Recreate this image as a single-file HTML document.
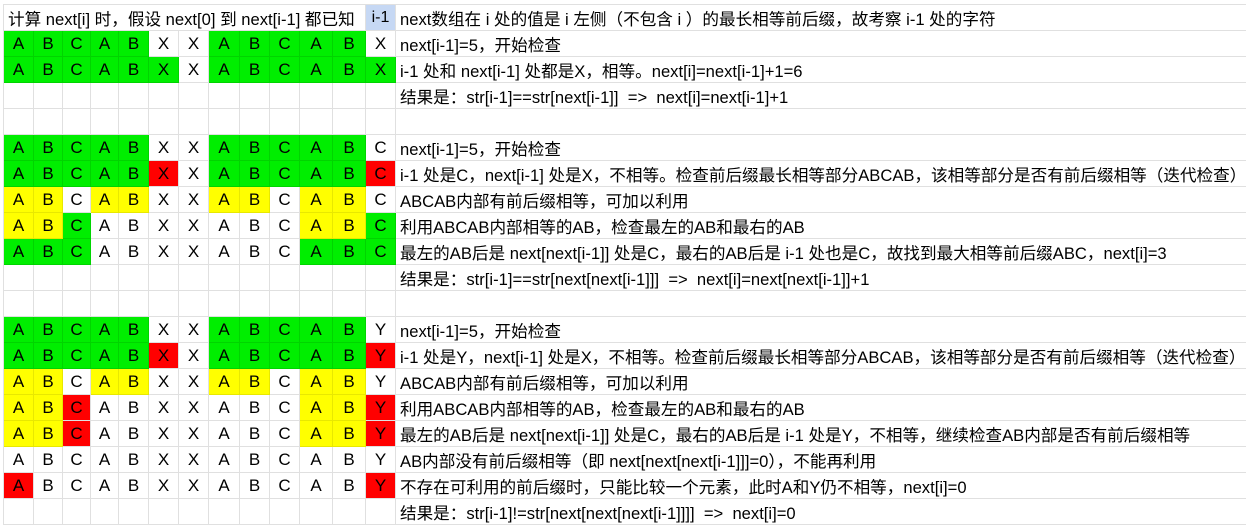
<!DOCTYPE html>
<html><head><meta charset="utf-8">
<style>
html,body{margin:0;padding:0;background:#fff;width:1246px;height:528px;overflow:hidden}
.w{position:absolute;left:3px;top:4px;border-top:1px solid #e0e0e0;border-left:1px solid #e0e0e0;box-sizing:border-box;width:1243px}
.r{display:grid;grid-template-columns:30px 29px 28px 28px 30px 30px 30px 31px 30px 30px 33px 33px 30px 851px;height:26px}
.r>i{font-style:normal;box-sizing:border-box;border-right:1px solid #e0e0e0;border-bottom:1px solid #e0e0e0;display:flex;align-items:center;justify-content:center;font:17px "Liberation Sans",sans-serif;color:#000;background:#fff}
.r>i.t{border-right:none;justify-content:flex-start;padding-left:4px;font:16.6px "Liberation Sans","Noto Sans CJK SC",sans-serif;white-space:pre}
.r>i.h{grid-column:1 / span 12;justify-content:flex-start;padding-left:4px;font:16.6px "Liberation Sans","Noto Sans CJK SC",sans-serif;white-space:pre}
.r>i.b{background:#c6d8f4;font-size:16px}
.r>i.g{background:#00ee00;border-color:#00d400}
.r>i.y{background:#ffff00;border-color:#e8e800}
.r>i.x{background:#ff0000}
</style></head><body>
<div class="w">
<div class="r"><i class="h">计算 next[i] 时，假设 next[0] 到 next[i-1] 都已知</i><i class="b">i-1</i><i class="t">next数组在 i 处的值是 i 左侧（不包含 i ）的最长相等前后缀，故考察 i-1 处的字符</i></div>
<div class="r"><i class="g">A</i><i class="g">B</i><i class="g">C</i><i class="g">A</i><i class="g">B</i><i>X</i><i>X</i><i class="g">A</i><i class="g">B</i><i class="g">C</i><i class="g">A</i><i class="g">B</i><i>X</i><i class="t">next[i-1]=5，开始检查</i></div>
<div class="r"><i class="g">A</i><i class="g">B</i><i class="g">C</i><i class="g">A</i><i class="g">B</i><i class="g">X</i><i>X</i><i class="g">A</i><i class="g">B</i><i class="g">C</i><i class="g">A</i><i class="g">B</i><i class="g">X</i><i class="t">i-1 处和 next[i-1] 处都是X，相等。next[i]=next[i-1]+1=6</i></div>
<div class="r"><i></i><i></i><i></i><i></i><i></i><i></i><i></i><i></i><i></i><i></i><i></i><i></i><i></i><i class="t">结果是：str[i-1]==str[next[i-1]]  =>  next[i]=next[i-1]+1</i></div>
<div class="r"><i></i><i></i><i></i><i></i><i></i><i></i><i></i><i></i><i></i><i></i><i></i><i></i><i></i><i class="t"></i></div>
<div class="r"><i class="g">A</i><i class="g">B</i><i class="g">C</i><i class="g">A</i><i class="g">B</i><i>X</i><i>X</i><i class="g">A</i><i class="g">B</i><i class="g">C</i><i class="g">A</i><i class="g">B</i><i>C</i><i class="t">next[i-1]=5，开始检查</i></div>
<div class="r"><i class="g">A</i><i class="g">B</i><i class="g">C</i><i class="g">A</i><i class="g">B</i><i class="x">X</i><i>X</i><i class="g">A</i><i class="g">B</i><i class="g">C</i><i class="g">A</i><i class="g">B</i><i class="x">C</i><i class="t">i-1 处是C，next[i-1] 处是X，不相等。检查前后缀最长相等部分ABCAB，该相等部分是否有前后缀相等（迭代检查）</i></div>
<div class="r"><i class="y">A</i><i class="y">B</i><i>C</i><i class="y">A</i><i class="y">B</i><i>X</i><i>X</i><i class="y">A</i><i class="y">B</i><i>C</i><i class="y">A</i><i class="y">B</i><i>C</i><i class="t">ABCAB内部有前后缀相等，可加以利用</i></div>
<div class="r"><i class="y">A</i><i class="y">B</i><i class="g">C</i><i>A</i><i>B</i><i>X</i><i>X</i><i>A</i><i>B</i><i>C</i><i class="y">A</i><i class="y">B</i><i class="g">C</i><i class="t">利用ABCAB内部相等的AB，检查最左的AB和最右的AB</i></div>
<div class="r"><i class="g">A</i><i class="g">B</i><i class="g">C</i><i>A</i><i>B</i><i>X</i><i>X</i><i>A</i><i>B</i><i>C</i><i class="g">A</i><i class="g">B</i><i class="g">C</i><i class="t">最左的AB后是 next[next[i-1]] 处是C，最右的AB后是 i-1 处也是C，故找到最大相等前后缀ABC，next[i]=3</i></div>
<div class="r"><i></i><i></i><i></i><i></i><i></i><i></i><i></i><i></i><i></i><i></i><i></i><i></i><i></i><i class="t">结果是：str[i-1]==str[next[next[i-1]]]  =>  next[i]=next[next[i-1]]+1</i></div>
<div class="r"><i></i><i></i><i></i><i></i><i></i><i></i><i></i><i></i><i></i><i></i><i></i><i></i><i></i><i class="t"></i></div>
<div class="r"><i class="g">A</i><i class="g">B</i><i class="g">C</i><i class="g">A</i><i class="g">B</i><i>X</i><i>X</i><i class="g">A</i><i class="g">B</i><i class="g">C</i><i class="g">A</i><i class="g">B</i><i>Y</i><i class="t">next[i-1]=5，开始检查</i></div>
<div class="r"><i class="g">A</i><i class="g">B</i><i class="g">C</i><i class="g">A</i><i class="g">B</i><i class="x">X</i><i>X</i><i class="g">A</i><i class="g">B</i><i class="g">C</i><i class="g">A</i><i class="g">B</i><i class="x">Y</i><i class="t">i-1 处是Y，next[i-1] 处是X，不相等。检查前后缀最长相等部分ABCAB，该相等部分是否有前后缀相等（迭代检查）</i></div>
<div class="r"><i class="y">A</i><i class="y">B</i><i>C</i><i class="y">A</i><i class="y">B</i><i>X</i><i>X</i><i class="y">A</i><i class="y">B</i><i>C</i><i class="y">A</i><i class="y">B</i><i>Y</i><i class="t">ABCAB内部有前后缀相等，可加以利用</i></div>
<div class="r"><i class="y">A</i><i class="y">B</i><i class="x">C</i><i>A</i><i>B</i><i>X</i><i>X</i><i>A</i><i>B</i><i>C</i><i class="y">A</i><i class="y">B</i><i class="x">Y</i><i class="t">利用ABCAB内部相等的AB，检查最左的AB和最右的AB</i></div>
<div class="r"><i class="y">A</i><i class="y">B</i><i class="x">C</i><i>A</i><i>B</i><i>X</i><i>X</i><i>A</i><i>B</i><i>C</i><i class="y">A</i><i class="y">B</i><i class="x">Y</i><i class="t">最左的AB后是 next[next[i-1]] 处是C，最右的AB后是 i-1 处是Y，不相等，继续检查AB内部是否有前后缀相等</i></div>
<div class="r"><i>A</i><i>B</i><i>C</i><i>A</i><i>B</i><i>X</i><i>X</i><i>A</i><i>B</i><i>C</i><i>A</i><i>B</i><i>Y</i><i class="t">AB内部没有前后缀相等（即 next[next[next[i-1]]]=0），不能再利用</i></div>
<div class="r"><i class="x">A</i><i>B</i><i>C</i><i>A</i><i>B</i><i>X</i><i>X</i><i>A</i><i>B</i><i>C</i><i>A</i><i>B</i><i class="x">Y</i><i class="t">不存在可利用的前后缀时，只能比较一个元素，此时A和Y仍不相等，next[i]=0</i></div>
<div class="r"><i></i><i></i><i></i><i></i><i></i><i></i><i></i><i></i><i></i><i></i><i></i><i></i><i></i><i class="t">结果是：str[i-1]!=str[next[next[next[i-1]]]]  =>  next[i]=0</i></div>
</div>
</body></html>
